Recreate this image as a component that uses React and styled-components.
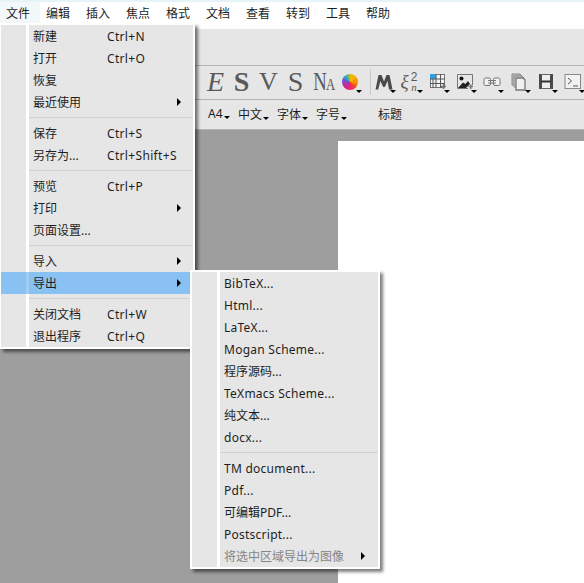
import React from "react";
import styled, { createGlobalStyle } from "styled-components";

const Global = createGlobalStyle`
  html, body { margin: 0; padding: 0; background: #fff; }
  * { box-sizing: border-box; }
`;
const FONT = `"Noto Sans", "Noto Sans CJK SC", sans-serif`;

const Root = styled.div`
  position: relative; width: 584px; height: 583px; overflow: hidden;
  display: flex; flex-direction: column;
  font-family: ${FONT}; font-size: 12px; color: #1e1e1e; background: #fff;
`;
const TitleStrip = styled.div`height: 2px; background: #e6f4f8; flex: none;`;
const MenuBar = styled.div`height: 27px; flex: none; display: flex; background: #fff;`;
const MenuTitle = styled.div`
  width: 40px; height: 100%; display: flex; align-items: center; padding: 0 0 5px 6px; white-space: nowrap;
  background: ${p => (p.$active ? "#f3f8fb" : "transparent")};
`;
const ToolRow = styled.div`
  flex: none; height: ${p => p.$h}px; background: #e6e6e6; border-bottom: 1px solid #b4b4b4;
  display: flex; align-items: center; padding: 0 0 ${p => p.$pb || 0}px ${p => p.$pad || 0}px;
`;
const IconButton = styled.div`
  position: relative; width: 27px; height: 24px; flex: none; display: flex; align-items: center; justify-content: center; color: #5a5a5a;
`;
const Caret = styled.i`
  position: absolute; right: ${p => p.$r ?? 1}px; bottom: ${p => p.$b ?? 1}px; width: 0; height: 0;
  border-left: 3px solid transparent; border-right: 3px solid transparent; border-top: 3px solid #000;
`;
const Glyph = styled.span`
  font-family: "Liberation Serif", serif; font-size: ${p => p.$s || 22}px; line-height: 1;
  font-style: ${p => (p.$i ? "italic" : "normal")}; font-weight: ${p => (p.$b ? 700 : 400)};
  margin-left: ${p => p.$ml || 0}px;
`;
const CondensedN = styled.span`display: inline-block; transform: scaleX(.72); transform-origin: right center; font-size: 26px; margin-left: -3px;`;
const SmallCap = styled.span`display: inline-block; font-size: 17px; transform: scaleX(.75); transform-origin: left center; width: 8px;`;
const FormulaBox = styled.div`display: flex; align-items: center; gap: 0; color: #5a5a5a; font-family: "Liberation Serif", serif; margin-left: -2px;`;
const Xi = styled.span`font-size: 19px; font-style: italic; line-height: 20px; width: 9px; overflow: visible;`;
const FormulaStack = styled.div`display: flex; flex-direction: column; align-items: center; width: 9px;`;
const Sup = styled.span`font-family: "Liberation Sans", sans-serif; font-size: 12px; line-height: 11px; height: 11px;`;
const Sub = styled.span`font-size: 11px; font-style: italic; line-height: 9px; height: 9px;`;
const ToolSep = styled.div`width: 1px; height: 26px; background: #c8c8c8; margin: 0 ${p => p.$r}px 0 ${p => p.$l}px; flex: none;`;
const TextTool = styled.div`
  position: relative; flex: none; width: ${p => p.$w}px; white-space: nowrap; color: #1e1e1e;
`;
const Work = styled.div`flex: 1; background: #9e9e9e; padding: 11px 0 0 338px; display: flex;`;
const Page = styled.div`flex: 1; background: #fff;`;

const Menu = styled.div`
  position: absolute; left: ${p => p.$x}px; top: ${p => p.$y}px; width: ${p => p.$w}px;
  border: 2px solid #fff; border-left-width: ${p => p.$bl ?? 2}px; background: #e6e6e6;
  box-shadow: 3px 3px 3px rgba(0,0,0,.5); white-space: nowrap;
`;
const Row = styled.div`
  height: 22px; display: flex; align-items: center;
  background: ${p => (p.$hover ? "#8ac1f3" : "transparent")};
  color: ${p => (p.$disabled ? "#858585" : "#1e1e1e")};
`;
const Gutter = styled.div`
  flex: none; align-self: stretch; width: ${p => p.$w + 3}px;
  border-right: 3px solid ${p => (p.$hover ? "rgba(255,255,255,.2)" : "#fff")};
`;
const Label = styled.span`
  flex: none; margin-left: 4px; width: ${p => (p.$w ? p.$w + "px" : "auto")};
  letter-spacing: ${p => (p.$latin ? ".25px" : "0")};
`;
const Shortcut = styled.span`flex: none; letter-spacing: .33px;`;
const Arrow = styled.i`
  margin-left: auto; margin-right: ${p => p.$r}px; width: 0; height: 0; flex: none;
  border-top: 4px solid transparent; border-bottom: 4px solid transparent; border-left: 4px solid #000;
`;
const SepRow = styled.div`height: 9px; display: flex;`;
const SepLine = styled.div`flex: 1; height: 1px; background: #d2d2d2; margin-top: 4px;`;

const titles = ["文件", "编辑", "插入", "焦点", "格式", "文档", "查看", "转到", "工具", "帮助"];
const fileMenu = [
  { t: "新建", k: "Ctrl+N" }, { t: "打开", k: "Ctrl+O" }, { t: "恢复" }, { t: "最近使用", a: 1 }, 0,
  { t: "保存", k: "Ctrl+S" }, { t: "另存为...", k: "Ctrl+Shift+S" }, 0,
  { t: "预览", k: "Ctrl+P" }, { t: "打印", a: 1 }, { t: "页面设置..." }, 0,
  { t: "导入", a: 1 }, { t: "导出", a: 1, h: 1 }, 0,
  { t: "关闭文档", k: "Ctrl+W" }, { t: "退出程序", k: "Ctrl+Q" },
];
const exportMenu = [
  { t: "BibTeX..." }, { t: "Html..." }, { t: "LaTeX..." }, { t: "Mogan Scheme..." }, { t: "程序源码..." },
  { t: "TeXmacs Scheme..." }, { t: "纯文本..." }, { t: "docx..." }, 0,
  { t: "TM document..." }, { t: "Pdf..." }, { t: "可编辑PDF..." }, { t: "Postscript..." },
  { t: "将选中区域导出为图像", a: 1, d: 1 },
];
const isLatin = s => /^[\x00-\x7f]+$/.test(s);

const MenuPanel = ({ items, x, y, w, gutter, labelW, arrowR, bl }) => (
  <Menu $x={x} $y={y} $w={w} $bl={bl}>
    {items.map((it, i) =>
      it === 0 ? (
        <SepRow key={i}><Gutter $w={gutter} /><SepLine /></SepRow>
      ) : (
        <Row key={i} $hover={it.h} $disabled={it.d}>
          <Gutter $w={gutter} $hover={it.h} />
          <Label $w={it.k ? labelW : 0} $latin={isLatin(it.t)}>{it.t}</Label>
          {it.k && <Shortcut>{it.k}</Shortcut>}
          {it.a && <Arrow $r={arrowR} />}
        </Row>
      )
    )}
  </Menu>
);

const Conic = styled.div`
  width: 16px; height: 16px; border-radius: 50%;
  background: conic-gradient(#f5b400 0 60deg, #f59300 60deg 100deg, #ef4a2a 130deg, #e8207a 190deg, #c02ea0 240deg, #5c5cd8 290deg, #2fa9c8 320deg, #7cc03c 350deg, #f5b400 360deg);
`;
const Ico = ({ children }) => <svg width="18" height="18" viewBox="0 0 18 18" fill="none">{children}</svg>;

const MIcon = () => <Ico><path d="M0.500 16.500 L3.500 2 H6.500 L9 8.500 L11.500 2 H14.500 L17.500 16.500 H14 L12.600 8 L9.800 14 H8.200 L5.400 8 L3.200 16.500 Z" fill="#4a4a4a" /></Ico>;
const FormulaIcon = () => (
  <FormulaBox>
    <Xi>ξ</Xi>
    <FormulaStack><Sup>2</Sup><Sub>n</Sub></FormulaStack>
  </FormulaBox>
);
const TableIcon = () => (
  <Ico>
    <rect x="1.500" y="1.500" width="14" height="13" fill="#f4f4f4" stroke="#777" />
    <rect x="1" y="1" width="6" height="5" fill="#2f9fe8" />
    <path d="M7 1V15M11.500 1V15M1 6H16M1 10.500H16M4 6V15" stroke="#555" />
    <path d="M12 13.500H17M14.500 11V16" stroke="#777" strokeWidth="1.500" />
  </Ico>
);
const ImageIcon = () => (
  <Ico>
    <path d="M1.500 15.500V1.500H16.500V12M1.500 15.500H12" stroke="#777" />
    <circle cx="5.500" cy="5.500" r="2" fill="#111" />
    <path d="M2 15 L7 9.500 L9.500 11 L12 8 L14 11 L10 15Z" fill="#222" />
    <path d="M12.500 13.500H17M14.800 11.500V16" stroke="#777" strokeWidth="1.500" />
  </Ico>
);
const LinkIcon = () => (
  <Ico>
    <rect x="1" y="5" width="6.500" height="7.500" rx="1.500" fill="#f2f2f2" stroke="#777" />
    <rect x="10.500" y="5" width="6.500" height="7.500" rx="1.500" fill="#f2f2f2" stroke="#777" />
    <path d="M5 7.500H13M5 10H13" stroke="#777" />
  </Ico>
);
const CopyIcon = () => (
  <Ico>
    <path d="M2 1H10L12 3V12H2Z" fill="#bbb" stroke="#888" />
    <path d="M4 3H12L14 5V14H4Z" fill="#ccc" stroke="#888" />
    <path d="M6 5H13L15 7V17H6Z" fill="#f0f0f0" stroke="#777" strokeWidth="1.300" />
  </Ico>
);
const FilmIcon = () => (
  <Ico>
    <rect x="3" y="1" width="12" height="15" fill="#eee" />
    <path d="M2 1H5V16H2ZM13 1H16V16H13Z" fill="#4a4a4a" />
    <path d="M4 1.500H14M4 15.500H14" stroke="#666" />
    <rect x="4" y="7.500" width="10" height="2" fill="#333" />
  </Ico>
);
const TermIcon = () => (
  <Ico>
    <rect x="1" y="1.500" width="15.500" height="14" fill="#f2f2f2" stroke="#888" />
    <path d="M4 5 L7.500 8 L4 11" stroke="#555" />
    <path d="M9 13H14" stroke="#555" />
  </Ico>
);

const Btn = ({ children, caret }) => (
  <IconButton>{children}{caret && <Caret />}</IconButton>
);

export default function App() {
  return (
    <Root>
      <Global />
      <TitleStrip />
      <MenuBar>
        {titles.map((t, i) => <MenuTitle key={t} $active={i === 0}>{t}</MenuTitle>)}
      </MenuBar>
      <ToolRow $h={37} />
      <ToolRow $h={34} $pad={201} $pb={1}>
        <Btn><Glyph $i $s={28} $ml={2}>E</Glyph></Btn>
        <Btn><Glyph $b $s={28}>S</Glyph></Btn>
        <Btn><Glyph $s={26}>V</Glyph></Btn>
        <Btn><Glyph $s={28}>S</Glyph></Btn>
        <Btn><Glyph><CondensedN>N</CondensedN><SmallCap>A</SmallCap></Glyph></Btn>
        <Btn caret><Conic /></Btn>
        <ToolSep $l={7} $r={-1} />
        <Btn caret><MIcon /></Btn>
        <Btn caret><FormulaIcon /></Btn>
        <Btn caret><TableIcon /></Btn>
        <Btn caret><ImageIcon /></Btn>
        <Btn caret><LinkIcon /></Btn>
        <Btn caret><CopyIcon /></Btn>
        <Btn caret><FilmIcon /></Btn>
        <Btn caret><TermIcon /></Btn>
      </ToolRow>
      <ToolRow $h={30} $pad={208} $pb={2}>
        <TextTool $w={30}>A4<Caret $r={8} $b={3} /></TextTool>
        <TextTool $w={39}>中文<Caret $r={8} $b={3} /></TextTool>
        <TextTool $w={39}>字体<Caret $r={8} $b={3} /></TextTool>
        <TextTool $w={62}>字号<Caret $r={31} $b={3} /></TextTool>
        <TextTool $w={30}>标题</TextTool>
      </ToolRow>
      <Work><Page /></Work>
      <MenuPanel items={fileMenu} x={0} y={23} w={195} gutter={25} labelW={74} arrowR={12} bl={1} />
      <MenuPanel items={exportMenu} x={190} y={270} w={190} gutter={25} arrowR={13} />
    </Root>
  );
}
